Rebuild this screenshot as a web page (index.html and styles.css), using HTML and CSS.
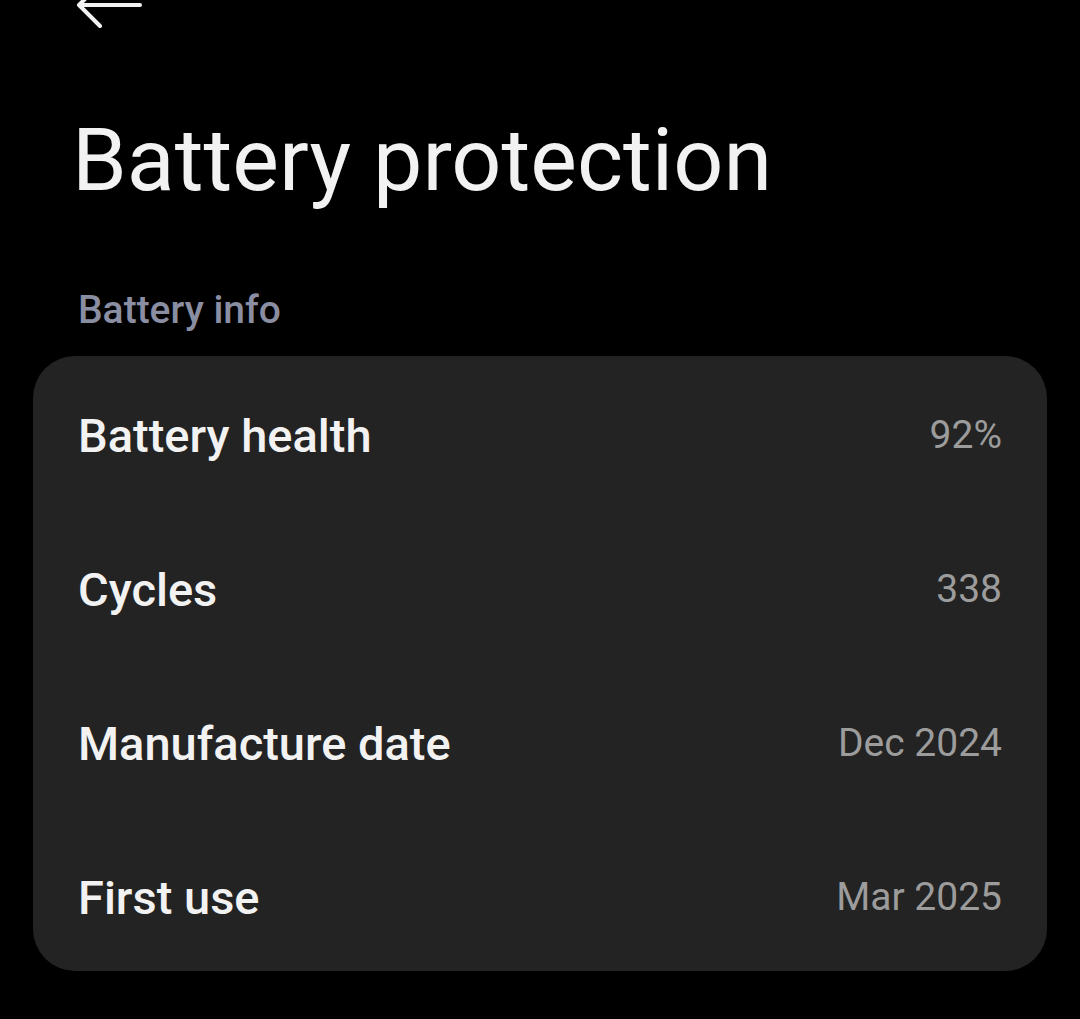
FILE: index.html
```html
<!DOCTYPE html>
<html>
  <head>
    <title>Battery protection</title>
    <meta charset="UTF-8">
    <meta name="viewport" content="width=device-width, initial-scale=1"/>
    <link rel="stylesheet" href="styles.css">
  </head>
  <body>
    <div class="topbar">
      <svg class="back" width="70" height="34" viewBox="0 0 70 34">
        <path d="M66 5H6M26 -16L5 5L26 26" fill="none" stroke="#f2f2f2" stroke-width="4" stroke-linecap="round" stroke-linejoin="round"/>
      </svg>
    </div>
    <h1 class="title">Battery protection</h1>
    <div class="section">Battery info</div>
    <div class="card">
      <div class="row"><span class="label">Battery health</span><span class="value">92%</span></div>
      <div class="row"><span class="label">Cycles</span><span class="value">338</span></div>
      <div class="row"><span class="label">Manufacture date</span><span class="value">Dec 2024</span></div>
      <div class="row"><span class="label">First use</span><span class="value">Mar 2025</span></div>
    </div>
  </body>
</html>
```

FILE: styles.css
```css
html, body {
  width: 100%;
  height: 100%;
}
body {
  margin: 0;
  background: #000;
  color: #f2f2f2;
  font-family: Roboto, 'Noto Sans', sans-serif;
  overflow: hidden;
}
.topbar {
  height: 34px;
  padding-left: 74px;
}
.back {
  display: block;
}
.title {
  margin: 80px 0 0 72px;
  font-size: 88px;
  font-weight: 400;
  line-height: 92px;
}
.section {
  margin: 82px 0 0 78px;
  font-size: 39px;
  font-weight: 500;
  color: #8a8ea3;
  line-height: 44px;
}
.card {
  margin: 24px 33px 0 33px;
  background: #232323;
  border-radius: 42px;
  padding: 2px 45px 0 45px;
  height: 615px;
  box-sizing: border-box;
}
.row {
  height: 154px;
  display: flex;
  align-items: center;
  justify-content: space-between;
}
.label {
  font-size: 47px;
  font-weight: 500;
  color: #f2f2f2;
}
.value {
  font-size: 39px;
  color: #9c9c9c;
}
```
